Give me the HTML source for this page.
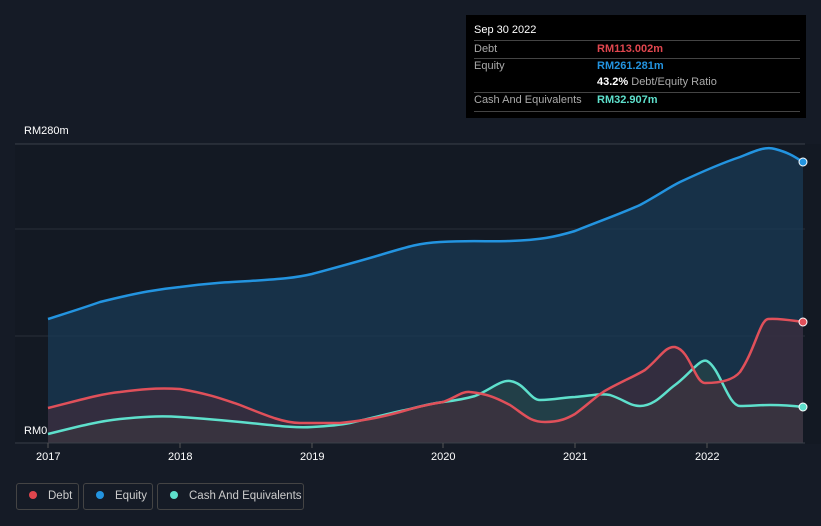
<!DOCTYPE html>
<html><head><style>
html,body{margin:0;width:821px;height:526px;overflow:hidden}
body{background:#151b26;font-family:"Liberation Sans",sans-serif;position:relative}
.t{position:absolute;font-size:11px;color:#fff}
.tip{position:absolute;left:466px;top:15px;width:340px;height:103px;background:#000;}
.row{position:absolute;left:8px;width:326px;border-top:1px solid #444;height:17px;font-size:11px;color:#aaa}
.row span{position:absolute;left:123px;font-weight:bold}
.leg{position:absolute;top:483px;height:27px;border:1px solid #444;border-radius:3px;font-size:11.5px;color:#ccc;line-height:25px;box-sizing:border-box;white-space:nowrap}
.leg i{display:inline-block;width:8px;height:8px;border-radius:50%;margin:0 11px 0 12px;vertical-align:0px}
</style></head><body>
<svg width="821" height="526" style="position:absolute;left:0;top:0">
<rect x="15" y="144" width="806" height="300" fill="#131923"/>
<line x1="15" y1="144" x2="805" y2="144" stroke="#3a404a"/>
<line x1="15" y1="229" x2="805" y2="229" stroke="#2a303a"/>
<line x1="15" y1="336" x2="805" y2="336" stroke="#2a303a"/>
<path d="M48,319 C70,312 80,309 100,302 C140,292 160,289 180,287 C210,283 230,282 250,281 C280,279 295,278 312,274 C345,265 360,261 380,255 C410,246 420,243 440,242 C475,240 490,242 510,241 C540,240 555,237 575,231 C605,219 620,214 640,205 C660,194 668,188 680,182 C710,168 725,162 740,157 C755,151 765,146 775,149 C790,153 795,157 803,162 L803,443 L48,443Z" fill="#1a3a55" fill-opacity="0.75"/>
<path d="M48,319 C70,312 80,309 100,302 C140,292 160,289 180,287 C210,283 230,282 250,281 C280,279 295,278 312,274 C345,265 360,261 380,255 C410,246 420,243 440,242 C475,240 490,242 510,241 C540,240 555,237 575,231 C605,219 620,214 640,205 C660,194 668,188 680,182 C710,168 725,162 740,157 C755,151 765,146 775,149 C790,153 795,157 803,162" fill="none" stroke="#2394e0" stroke-width="2.5"/>
<path d="M48,434 C80,426 100,421 120,419 C150,416 165,416 180,417 C210,419 230,421 250,423 C280,426 295,428 312,427 C330,426 340,425 350,423 C380,416 395,412 410,409 C425,405 435,403 443,402 C460,400 468,398 475,396 C490,390 500,380 510,381 C525,383 530,400 540,400 C555,400 565,397 575,397 C590,396 600,393 610,395 C625,400 630,406 640,406 C655,406 665,392 675,385 C690,374 700,358 707,361 C720,368 728,406 740,406 C750,406 760,405 770,405 C785,405 795,406 803,407 L803,443 L48,443Z" fill="#2a4a4a" fill-opacity="0.6"/>
<path d="M48,408 C80,400 100,394 120,392 C150,388 165,388 180,389 C210,394 225,400 240,405 C270,417 285,423 300,423 L340,423 C370,420 385,416 400,412 C420,406 430,404 443,402 C455,398 462,391 470,392 C490,394 500,400 510,405 C525,415 530,422 545,422 C560,422 568,418 575,414 C590,403 598,394 610,388 C625,380 635,376 645,370 C660,358 665,346 675,347 C690,350 695,383 705,383 C725,383 735,378 740,372 C755,350 760,320 768,319 C780,318 795,321 803,322 L803,443 L48,443Z" fill="#4a2a38" fill-opacity="0.55"/>
<path d="M48,434 C80,426 100,421 120,419 C150,416 165,416 180,417 C210,419 230,421 250,423 C280,426 295,428 312,427 C330,426 340,425 350,423 C380,416 395,412 410,409 C425,405 435,403 443,402 C460,400 468,398 475,396 C490,390 500,380 510,381 C525,383 530,400 540,400 C555,400 565,397 575,397 C590,396 600,393 610,395 C625,400 630,406 640,406 C655,406 665,392 675,385 C690,374 700,358 707,361 C720,368 728,406 740,406 C750,406 760,405 770,405 C785,405 795,406 803,407" fill="none" stroke="#5ee0cc" stroke-width="2.5"/>
<path d="M48,408 C80,400 100,394 120,392 C150,388 165,388 180,389 C210,394 225,400 240,405 C270,417 285,423 300,423 L340,423 C370,420 385,416 400,412 C420,406 430,404 443,402 C455,398 462,391 470,392 C490,394 500,400 510,405 C525,415 530,422 545,422 C560,422 568,418 575,414 C590,403 598,394 610,388 C625,380 635,376 645,370 C660,358 665,346 675,347 C690,350 695,383 705,383 C725,383 735,378 740,372 C755,350 760,320 768,319 C780,318 795,321 803,322" fill="none" stroke="#e0505a" stroke-width="2.5"/>
<line x1="15" y1="443" x2="805" y2="443" stroke="#3a404a"/>
<g stroke="#555"><line x1="48" y1="443" x2="48" y2="448"/><line x1="180" y1="443" x2="180" y2="448"/><line x1="312" y1="443" x2="312" y2="448"/><line x1="443" y1="443" x2="443" y2="448"/><line x1="575" y1="443" x2="575" y2="448"/><line x1="707" y1="443" x2="707" y2="448"/></g>
<circle cx="803" cy="162" r="4" fill="#2394e0" stroke="#fff" stroke-width="1"/>
<circle cx="803" cy="322" r="4" fill="#e0505a" stroke="#fff" stroke-width="1"/>
<circle cx="803" cy="407" r="4" fill="#5ee0cc" stroke="#fff" stroke-width="1"/>
</svg>
<div class="t" style="left:24px;top:125px">RM280m</div>
<div class="t" style="left:24px;top:425px">RM0</div>
<div class="t" style="left:36px;top:451px">2017</div>
<div class="t" style="left:168px;top:451px">2018</div>
<div class="t" style="left:300px;top:451px">2019</div>
<div class="t" style="left:431px;top:451px">2020</div>
<div class="t" style="left:563px;top:451px">2021</div>
<div class="t" style="left:695px;top:451px">2022</div>
<div class="tip">
<div style="position:absolute;left:8px;top:9px;color:#fff;font-size:11px">Sep 30 2022</div>
<div class="row" style="top:25px;padding-top:2px">Debt<span style="color:#e0464e;top:2px">RM113.002m</span></div>
<div class="row" style="top:43px;padding-top:1px">Equity<span style="color:#2394e0;top:1px">RM261.281m</span></div>
<div class="row" style="top:60px;border:none;padding-top:1px"><span style="color:#fff;top:1px">43.2% <b style="color:#aaa;font-weight:normal">Debt/Equity Ratio</b></span></div>
<div class="row" style="top:77px;padding-top:1px;border-bottom:1px solid #444">Cash And Equivalents<span style="color:#5ee0cc;top:1px">RM32.907m</span></div>
</div>
<div class="leg" style="left:16px;width:63px"><i style="background:#e0464e"></i>Debt</div>
<div class="leg" style="left:83px;width:70px"><i style="background:#2394e0"></i>Equity</div>
<div class="leg" style="left:157px;width:147px"><i style="background:#5ee0cc"></i>Cash And Equivalents</div>
</body></html>
